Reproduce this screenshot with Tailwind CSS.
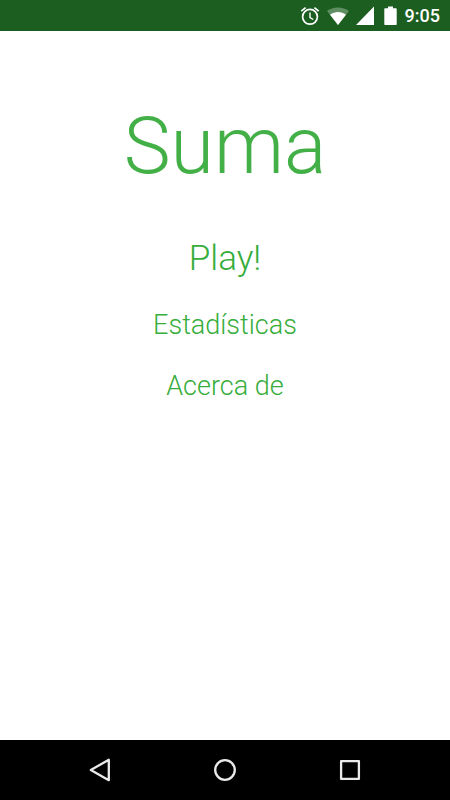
<!DOCTYPE html>
<html lang="es">
<head>
    <meta charset="UTF-8">
    <meta name="viewport" content="width=device-width, initial-scale=1.0">
    <title>Suma</title>
    <script src="https://cdn.jsdelivr.net/npm/@tailwindcss/browser@4"></script>
</head>
<body class="min-h-screen flex flex-col bg-white font-[Roboto,sans-serif]">
    <header class="h-[31px] bg-[#1b5e20] text-white flex items-center justify-end pr-[10px]">
        <svg class="w-5 h-5 mr-[7px]" viewBox="0 0 20 20" fill="none" stroke="currentColor" stroke-width="1.7" aria-hidden="true">
            <circle cx="10" cy="10.800" r="7.400"/>
            <path d="M1.300 5.200 5.600 1.600M18.700 5.200 14.400 1.600"/>
            <path d="M10 6.500v5l3.300 2" stroke-width="1.400"/>
        </svg>
        <svg class="w-[22px] h-5 mr-[7px]" viewBox="0 0 22 20" fill="currentColor" aria-hidden="true">
            <path d="M11 19 0 5C6 .3 16 .3 22 5z" opacity=".3"/>
            <path d="M11 19 3 8.800C8 5 14 5 19 8.800z"/>
        </svg>
        <svg class="w-[18px] h-5 mr-[10px]" viewBox="0 0 18 20" fill="currentColor" aria-hidden="true">
            <path d="M18 .5v18.500H0z"/>
        </svg>
        <svg class="w-[13px] h-5 mr-2" viewBox="0 0 13 20" fill="currentColor" aria-hidden="true">
            <path d="M4 .5h5v1.700h3q.7 0 .7.700v15.400q0 .7-.7.700H1q-.7 0-.7-.7V2.900q0-.7.7-.7h3z"/>
        </svg>
        <time class="text-lg font-medium">9:05</time>
    </header>

    <main class="flex-grow flex flex-col items-center pt-[67px] text-[#37ad3b] font-light">
        <h1 class="text-[79px] leading-[96px] text-[#43b047] font-light">Suma</h1>
        <nav class="flex flex-col items-center mt-[41px]">
            <button type="button" class="text-[35px] leading-[48px]">Play!</button>
            <button type="button" class="text-[27px] leading-[37px] mt-6">Estadísticas</button>
            <button type="button" class="text-[27px] leading-[37px] mt-6">Acerca de</button>
        </nav>
    </main>

    <footer class="h-[60px] bg-black text-[#eaeaea] flex items-center justify-center gap-[101px]">
        <button type="button" aria-label="Atrás">
            <svg class="w-6 h-6" viewBox="0 0 24 24" fill="none" stroke="currentColor" stroke-width="2.300" stroke-linejoin="round"><path d="M20.800 1.800v20.400L2.800 12z"/></svg>
        </button>
        <button type="button" aria-label="Inicio">
            <svg class="w-6 h-6" viewBox="0 0 24 24" fill="none" stroke="currentColor" stroke-width="2.300"><circle cx="12" cy="12" r="9.800"/></svg>
        </button>
        <button type="button" aria-label="Recientes">
            <svg class="w-6 h-6" viewBox="0 0 24 24" fill="none" stroke="currentColor" stroke-width="2.300" stroke-linejoin="round"><path d="M3.100 3.100h17.800v17.800H3.100z"/></svg>
        </button>
    </footer>
</body>
</html>
